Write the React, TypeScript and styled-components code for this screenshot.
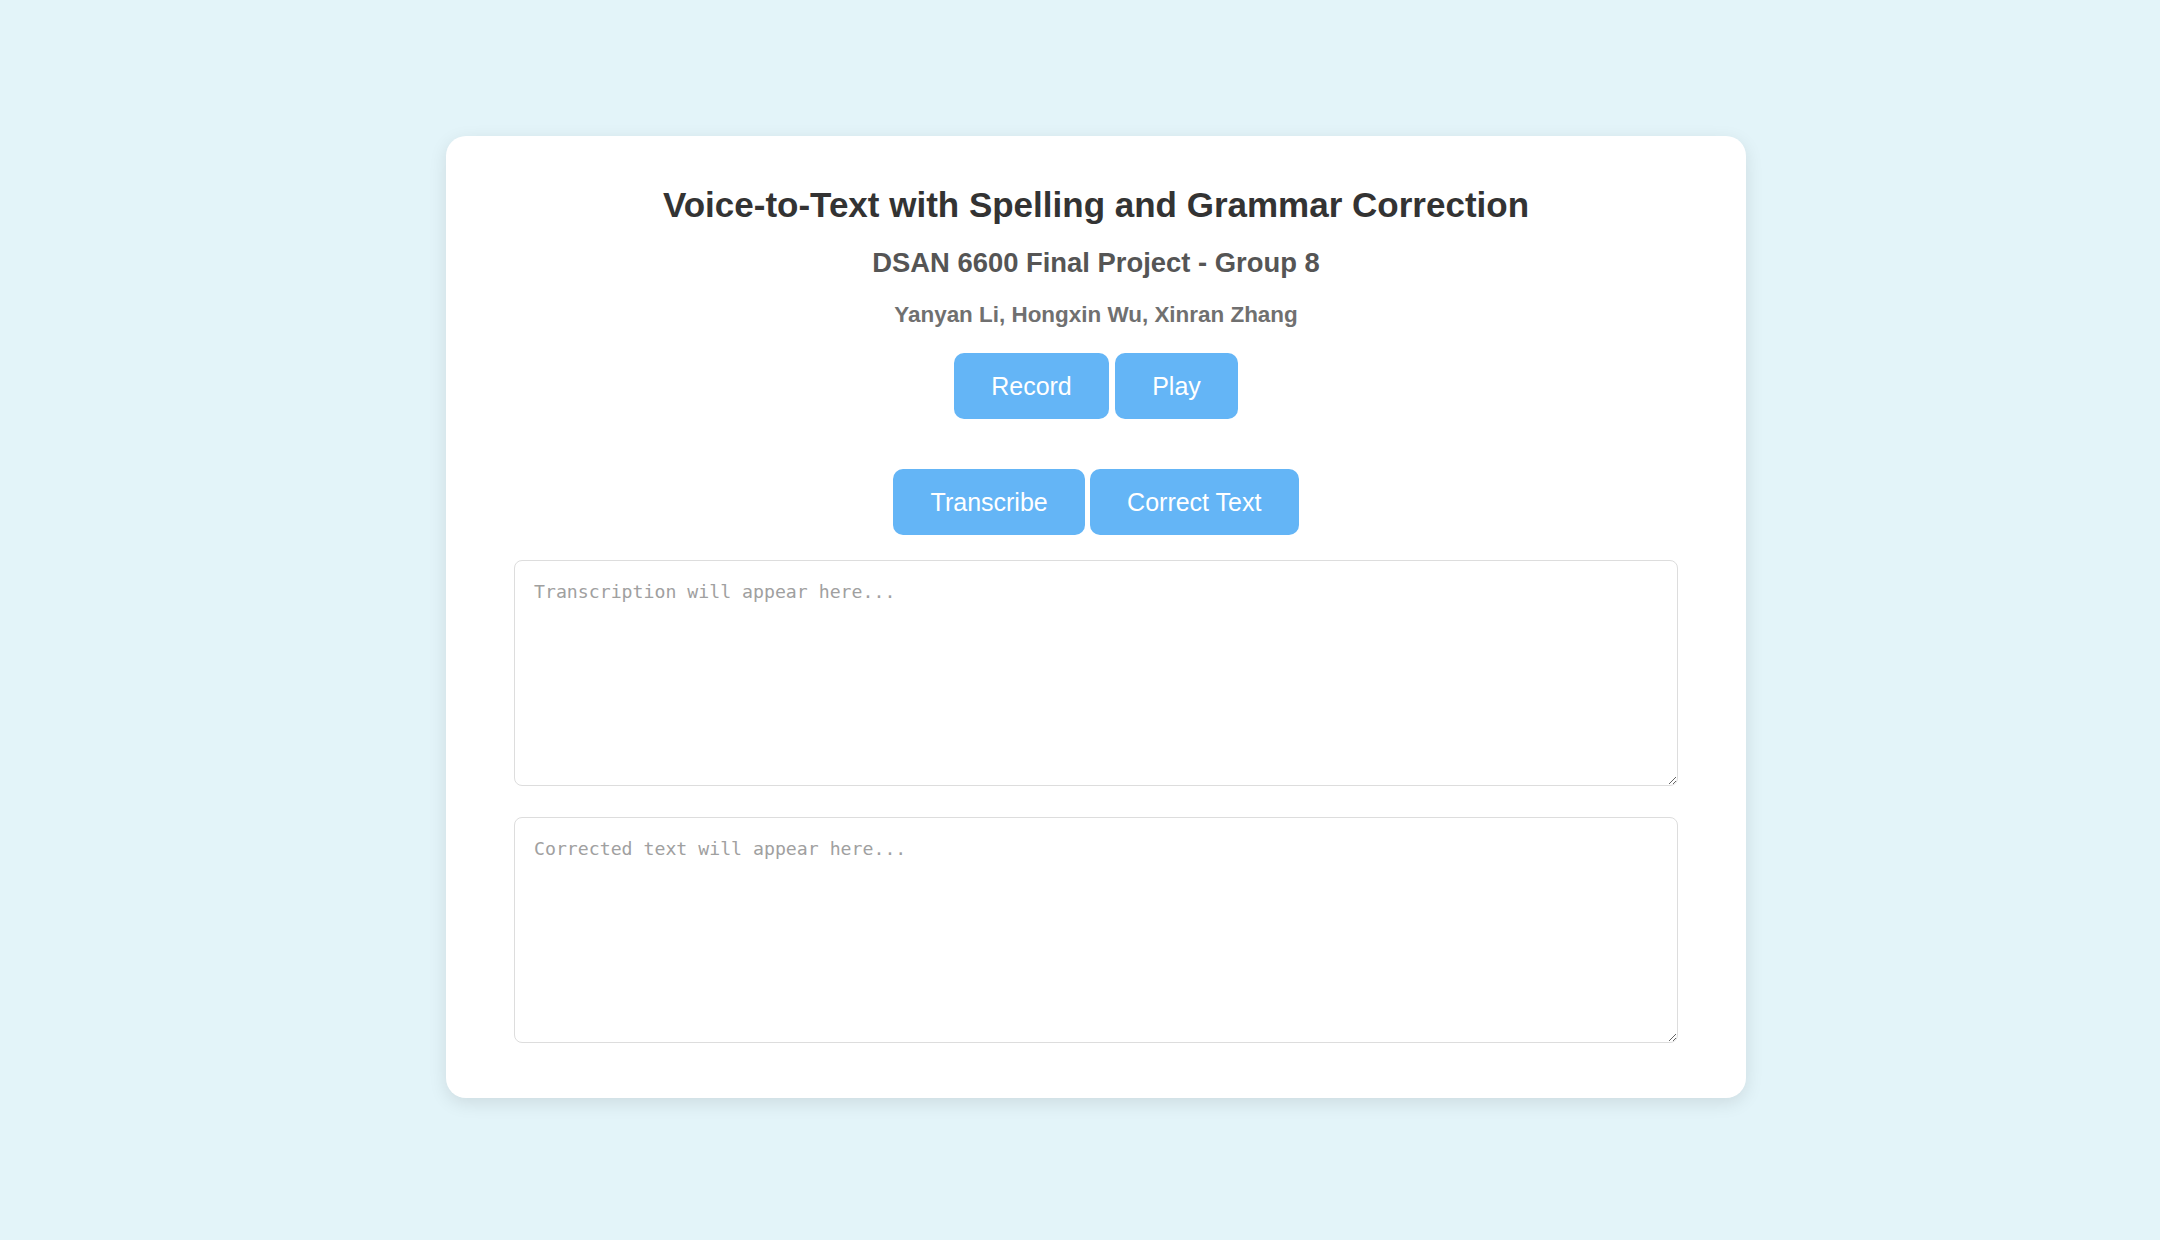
import React from "react";
import styled, { createGlobalStyle } from "styled-components";

const GlobalStyle = createGlobalStyle`
  html, body {
    margin: 0;
    padding: 0;
    background: #e3f4f9;
  }
  body {
    font-family: "Liberation Sans", Arial, sans-serif;
  }
`;

const Page = styled.div`
  display: flex;
  justify-content: center;
  align-items: flex-start;
  box-sizing: border-box;
  min-height: 100vh;
  padding: 136px 0 0 32px;
`;

const Card = styled.main`
  width: 1300px;
  box-sizing: border-box;
  background: #ffffff;
  border-radius: 20px;
  box-shadow: 0 5px 18px rgba(0, 0, 0, 0.1);
  padding: 49px 68px 55px;
  display: flex;
  flex-direction: column;
  align-items: center;
`;

const Title = styled.h1`
  margin: 0;
  font-size: 35px;
  line-height: 40px;
  font-weight: 700;
  color: #333333;
  text-align: center;
`;

const Subtitle = styled.h2`
  margin: 22px 0 0;
  font-size: 27.4px;
  line-height: 31.5px;
  font-weight: 700;
  color: #555555;
  text-align: center;
`;

const Authors = styled.p`
  margin: 23px 0 0;
  font-size: 22.45px;
  line-height: 25.6px;
  font-weight: 700;
  color: #707070;
  text-align: center;
`;

const ButtonRow = styled.div<{ $top: number; $gap: number }>`
  display: flex;
  justify-content: center;
  gap: ${(p) => p.$gap}px;
  margin-top: ${(p) => p.$top}px;
`;

const ActionButton = styled.button`
  font-family: "Liberation Sans", Arial, sans-serif;
  font-size: 25px;
  line-height: 28.8px;
  color: #ffffff;
  background: #64b5f6;
  border: none;
  border-radius: 10px;
  padding: 18.6px 37.2px;
  cursor: pointer;
`;

const TextBox = styled.textarea<{ $top: number }>`
  display: block;
  width: 100%;
  height: 226px;
  box-sizing: border-box;
  margin-top: ${(p) => p.$top}px;
  padding: 20px 19px;
  border: 1px solid #dddddd;
  border-radius: 8px;
  font-family: "DejaVu Sans Mono", "Liberation Mono", monospace;
  font-size: 18.2px;
  line-height: normal;
  color: #333333;
  background: #ffffff;
  outline: none;
  &::placeholder {
    color: #a0a0a0;
  }
`;

export default function App() {
  return (
    <>
      <GlobalStyle />
      <Page>
        <Card>
          <Title>Voice-to-Text with Spelling and Grammar Correction</Title>
          <Subtitle>DSAN 6600 Final Project - Group 8</Subtitle>
          <Authors>Yanyan Li, Hongxin Wu, Xinran Zhang</Authors>
          <ButtonRow $top={26} $gap={6}>
            <ActionButton>Record</ActionButton>
            <ActionButton>Play</ActionButton>
          </ButtonRow>
          <ButtonRow $top={50} $gap={5}>
            <ActionButton>Transcribe</ActionButton>
            <ActionButton>Correct Text</ActionButton>
          </ButtonRow>
          <TextBox $top={25} placeholder="Transcription will appear here..." />
          <TextBox $top={31} placeholder="Corrected text will appear here..." />
        </Card>
      </Page>
    </>
  );
}
